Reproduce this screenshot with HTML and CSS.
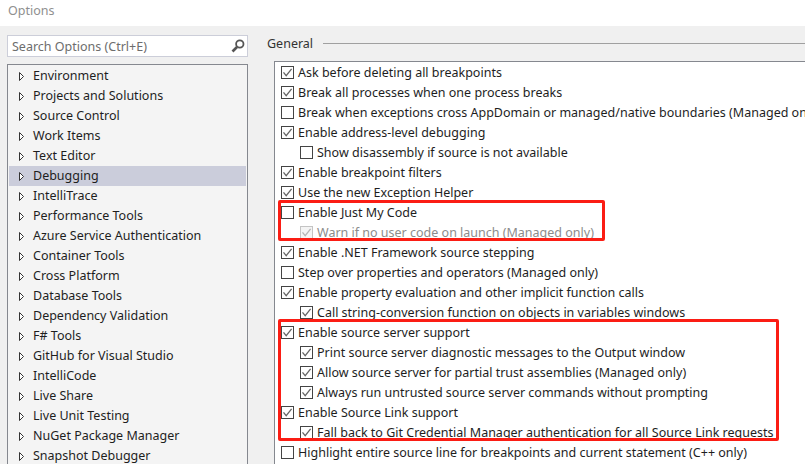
FILE: index.html
```html
<!DOCTYPE html>
<html lang="en">
<head>
<meta charset="utf-8">
<title>Options</title>
<link rel="stylesheet" href="styles.css">
</head>
<body>
<svg class="defs" width="0" height="0" aria-hidden="true">
  <symbol id="tick" viewBox="0 0 13 13"><path d="M2.5 6.3 5.2 9.6 10.6 2.8" fill="none" stroke="currentColor" stroke-width="1.3"/></symbol>
  <symbol id="arrow" viewBox="0 0 7 11"><path d="M1.5 1.5 5.5 5.5 1.5 9.5Z" fill="#fff" stroke="#333" stroke-width="1"/></symbol>
</svg>
<div class="window">
  <header class="titlebar">Options</header>
  <main class="content">
    <aside class="sidebar">
      <div class="search">
        <span>Search Options (Ctrl+E)</span>
        <svg class="search-icon" width="16" height="16" viewBox="0 0 16 16"><circle cx="9.8" cy="6" r="3.7" fill="none" stroke="#555" stroke-width="1.8"/><path d="M7 9 2.5 13.5" stroke="#555" stroke-width="2.6"/></svg>
      </div>
      <ul class="tree">
        <li><svg class="arrow"><use href="#arrow"/></svg>Environment</li>
        <li><svg class="arrow"><use href="#arrow"/></svg>Projects and Solutions</li>
        <li><svg class="arrow"><use href="#arrow"/></svg>Source Control</li>
        <li><svg class="arrow"><use href="#arrow"/></svg>Work Items</li>
        <li><svg class="arrow"><use href="#arrow"/></svg>Text Editor</li>
        <li class="selected"><svg class="arrow"><use href="#arrow"/></svg>Debugging</li>
        <li><svg class="arrow"><use href="#arrow"/></svg>IntelliTrace</li>
        <li><svg class="arrow"><use href="#arrow"/></svg>Performance Tools</li>
        <li><svg class="arrow"><use href="#arrow"/></svg>Azure Service Authentication</li>
        <li><svg class="arrow"><use href="#arrow"/></svg>Container Tools</li>
        <li><svg class="arrow"><use href="#arrow"/></svg>Cross Platform</li>
        <li><svg class="arrow"><use href="#arrow"/></svg>Database Tools</li>
        <li><svg class="arrow"><use href="#arrow"/></svg>Dependency Validation</li>
        <li><svg class="arrow"><use href="#arrow"/></svg>F# Tools</li>
        <li><svg class="arrow"><use href="#arrow"/></svg>GitHub for Visual Studio</li>
        <li><svg class="arrow"><use href="#arrow"/></svg>IntelliCode</li>
        <li><svg class="arrow"><use href="#arrow"/></svg>Live Share</li>
        <li><svg class="arrow"><use href="#arrow"/></svg>Live Unit Testing</li>
        <li><svg class="arrow"><use href="#arrow"/></svg>NuGet Package Manager</li>
        <li><svg class="arrow"><use href="#arrow"/></svg>Snapshot Debugger</li>
      </ul>
    </aside>
    <section class="panel">
      <div class="group-title"><span>General</span><i class="rule"></i></div>
      <div class="options">
        <div class="opt"><span class="box"><svg><use href="#tick"/></svg></span>Ask before deleting all breakpoints</div>
        <div class="opt"><span class="box"><svg><use href="#tick"/></svg></span>Break all processes when one process breaks</div>
        <div class="opt"><span class="box"></span>Break when exceptions cross AppDomain or managed/native boundaries (Managed only)</div>
        <div class="opt"><span class="box"><svg><use href="#tick"/></svg></span>Enable address-level debugging</div>
        <div class="opt sub"><span class="box"></span>Show disassembly if source is not available</div>
        <div class="opt"><span class="box"><svg><use href="#tick"/></svg></span>Enable breakpoint filters</div>
        <div class="opt"><span class="box"><svg><use href="#tick"/></svg></span>Use the new Exception Helper</div>
        <div class="opt"><span class="box"></span>Enable Just My Code</div>
        <div class="opt sub disabled"><span class="box"><svg><use href="#tick"/></svg></span>Warn if no user code on launch (Managed only)</div>
        <div class="opt"><span class="box"><svg><use href="#tick"/></svg></span>Enable .NET Framework source stepping</div>
        <div class="opt"><span class="box"></span>Step over properties and operators (Managed only)</div>
        <div class="opt"><span class="box"><svg><use href="#tick"/></svg></span>Enable property evaluation and other implicit function calls</div>
        <div class="opt sub"><span class="box"><svg><use href="#tick"/></svg></span>Call string-conversion function on objects in variables windows</div>
        <div class="opt"><span class="box"><svg><use href="#tick"/></svg></span>Enable source server support</div>
        <div class="opt sub"><span class="box"><svg><use href="#tick"/></svg></span>Print source server diagnostic messages to the Output window</div>
        <div class="opt sub"><span class="box"><svg><use href="#tick"/></svg></span>Allow source server for partial trust assemblies (Managed only)</div>
        <div class="opt sub"><span class="box"><svg><use href="#tick"/></svg></span>Always run untrusted source server commands without prompting</div>
        <div class="opt"><span class="box"><svg><use href="#tick"/></svg></span>Enable Source Link support</div>
        <div class="opt sub"><span class="box"><svg><use href="#tick"/></svg></span>Fall back to Git Credential Manager authentication for all Source Link requests</div>
        <div class="opt"><span class="box"></span>Highlight entire source line for breakpoints and current statement (C++ only)</div>
      </div>
    </section>
  </main>
  <div class="mark mark-one"></div>
  <div class="mark mark-two"></div>
</div>
</body>
</html>
```
FILE: styles.css
```css
* { box-sizing: border-box; }
html, body { margin: 0; padding: 0; }
body {
  width: 805px;
  height: 464px;
  overflow: hidden;
  font-family: "Noto Sans", "Open Sans", sans-serif;
  font-size: 12.5px;
  color: #1e1e1e;
  background: #f0f0f0;
}
.defs { position: absolute; }
.window { position: relative; width: 805px; height: 464px; overflow: hidden; display: flex; flex-direction: column; }
.titlebar { height: 26px; flex: none; background: #fff; color: #8f8f8f; padding: 2px 0 0 8px; font-size: 12.5px; line-height: 18px; }
.content { flex: 1; display: flex; min-height: 0; }
.sidebar { width: 241px; margin-left: 7px; padding-top: 9px; flex: none; }
.search {
  height: 22px;
  border: 1px solid #ccced9;
  background: #fff;
  color: #6d6d6d;
  display: flex;
  align-items: center;
  justify-content: space-between;
  padding: 0 0 0 4px;
}
.search-icon { margin-right: 1px; }
.tree {
  list-style: none;
  margin: 7px 0 0;
  padding: 1px 1px 0;
  height: 420px;
  border: 1px solid #85888f;
  background: #f4f4f4;
}
.tree li { height: 20px; line-height: 20px; display: flex; align-items: center; padding-left: 9px; }
.tree li.selected { background: #cbcddb; }
.arrow { width: 7px; height: 11px; margin-right: 8px; flex: none; }
.panel { flex: 1; margin-left: 19px; min-width: 0; }
.group-title { display: flex; align-items: center; height: 18px; margin: 8px 0 9px; }
.group-title span { color: #333; }
.rule { flex: 1; height: 1px; background: #a0a0a0; margin-left: 10px; }
.options {
  margin-left: 7px;
  height: 410px;
  padding-top: 1px;
  border: 1px solid #85888f;
  border-right: none;
  background: #fff;
  overflow: hidden;
}
.opt { height: 20px; display: flex; align-items: center; padding: 0 0 2px 6px; white-space: nowrap; }
.opt.sub { padding-left: 25px; }
.box { width: 13px; height: 13px; flex: none; border: 1px solid #444; margin: 1px 4px 0 0; background: #fff; color: #666; display: block; position: relative; }
.box svg { position: absolute; left: -1px; top: -1px; width: 13px; height: 13px; }
.disabled { color: #8c8c8c; }
.disabled .box { border-color: #c4c4c4; color: #b5b5b5; background: #f4f4f4; }
.mark { position: absolute; border: 3px solid #fb1d14; border-radius: 2px; pointer-events: none; }
.mark-one { left: 278px; top: 200px; width: 327px; height: 41px; }
.mark-two { left: 278px; top: 319px; width: 501px; height: 122px; }
```
